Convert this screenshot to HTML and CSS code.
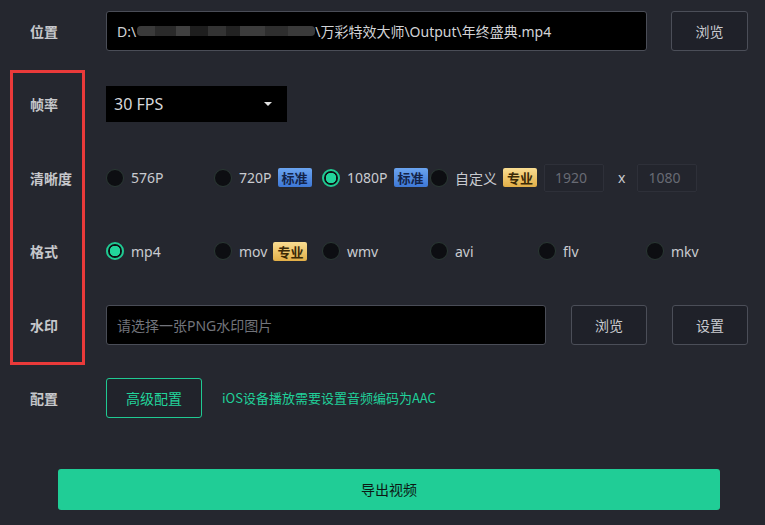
FILE: index.html
```html
<!DOCTYPE html>
<html lang="zh-CN">
<head>
<meta charset="utf-8">
<link rel="stylesheet" href="styles.css">
</head>
<body>
<div class="panel">
  <div class="annot"></div>
  <div class="rows">
    <div class="row">
      <div class="label">位置</div>
      <div class="field path">D:\<span class="blur"></span>\万彩特效大师\Output\年终盛典.mp4</div>
      <div class="btn w77">浏览</div>
    </div>
    <div class="row">
      <div class="label">帧率</div>
      <div class="select"><span>30 FPS</span><span class="caret"></span></div>
    </div>
    <div class="row">
      <div class="label">清晰度</div>
      <div class="opts">
        <div class="opt"><span class="radio"></span><span>576P</span></div>
        <div class="opt"><span class="radio"></span><span>720P</span><span class="badge std">标准</span></div>
        <div class="opt"><span class="radio on"></span><span>1080P</span><span class="badge std">标准</span></div>
        <div class="opt last"><span class="radio"></span><span>自定义</span><span class="badge pro">专业</span><span class="num">1920</span><span class="times">x</span><span class="num">1080</span></div>
      </div>
    </div>
    <div class="row">
      <div class="label">格式</div>
      <div class="opts">
        <div class="opt"><span class="radio on"></span><span>mp4</span></div>
        <div class="opt"><span class="radio"></span><span>mov</span><span class="badge pro">专业</span></div>
        <div class="opt"><span class="radio"></span><span>wmv</span></div>
        <div class="opt"><span class="radio"></span><span>avi</span></div>
        <div class="opt"><span class="radio"></span><span>flv</span></div>
        <div class="opt"><span class="radio"></span><span>mkv</span></div>
      </div>
    </div>
    <div class="row">
      <div class="label">水印</div>
      <div class="field wm placeholder">请选择一张PNG水印图片</div>
      <div class="btn w76 gap">浏览</div>
      <div class="btn w76">设置</div>
    </div>
    <div class="row">
      <div class="label">配置</div>
      <div class="btn green">高级配置</div>
      <div class="note">iOS设备播放需要设置音频编码为AAC</div>
    </div>
  </div>
  <div class="export">导出视频</div>
</div>
</body>
</html>
```

FILE: styles.css
```css
* { box-sizing: border-box; }
html, body { margin: 0; padding: 0; }
body {
  background: #25272f;
  width: 765px;
  height: 525px;
  overflow: hidden;
  font-family: "Noto Sans", "Noto Sans CJK SC", sans-serif;
  font-size: 14px;
  color: #c9cbd0;
}
.panel {
  position: relative;
  padding-top: 11px;
  height: 525px;
}
.annot {
  position: absolute;
  left: 10px;
  top: 70px;
  width: 75px;
  height: 295px;
  border: 3px solid #ea3a3a;
}
.rows {
  display: flex;
  flex-direction: column;
  gap: 33.4px;
  padding-left: 30px;
}
.row {
  display: flex;
  align-items: center;
  height: 40px;
}
.label {
  width: 76px;
  flex: none;
  font-weight: 700;
  color: #c6c7cb;
  font-family: "Noto Sans CJK SC", sans-serif;
}
.field {
  height: 40px;
  flex: none;
  background: #000;
  border: 1px solid #4a4d57;
  border-radius: 3px;
  display: flex;
  align-items: center;
  padding-left: 10px;
  color: #d2d3d6;
  white-space: nowrap;
}
.path { width: 541px; margin-right: 24px; }
.blur {
  display: inline-block;
  width: 178px;
  height: 10px;
  margin-left: 1px;
  background: linear-gradient(90deg, #3a3a3a 0 10%, #2a2a2a 10% 22%, #404040 22% 30%, #1e1e1e 30% 40%, #333 40% 50%, #222 50% 58%, #3c3c3c 58% 72%, #2e2e2e 72% 85%, #3a3a3a 85% 100%);
  border-radius: 4px;
}
.wm { width: 440px; margin-right: 25px; }
.placeholder { color: #72747b; }
.btn {
  height: 40px;
  border: 1px solid #4b4e58;
  border-radius: 3px;
  background: #1f2129;
  display: flex;
  align-items: center;
  justify-content: center;
  color: #c9cbd0;
  flex: none;
  font-family: "Noto Sans CJK SC", sans-serif;
}
.w77 { width: 77px; }
.w76 { width: 76px; }
.w76.gap { margin-right: 25px; }
.btn.green {
  width: 96px;
  border-color: #20c992;
  color: #22d59b;
  background: #21232b;
  margin-right: 20px;
}
.note {
  color: #20d099;
  font-size: 13px;
  font-family: "Noto Sans CJK SC", sans-serif;
}
.select {
  width: 181px;
  height: 36px;
  background: #000;
  display: flex;
  align-items: center;
  justify-content: space-between;
  padding: 0 15px 0 8px;
  color: #d6d7da;
  font-size: 16px;
}
.caret {
  width: 0;
  height: 0;
  border-left: 4.5px solid transparent;
  border-right: 4.5px solid transparent;
  border-top: 4px solid #e0e0e0;
}
.opts { display: flex; align-items: center; }
.opt {
  width: 108px;
  display: flex;
  align-items: center;
  flex: none;
  white-space: nowrap;
}
.opt.last { width: auto; }
.radio {
  width: 18px;
  height: 18px;
  border-radius: 50%;
  background: #0d0e12;
  border: 1px solid #2a3833;
  margin-right: 7px;
  flex: none;
}
.radio.on {
  border: 2px solid #20c992;
  background: radial-gradient(circle, #22d59b 0 5px, #0f1014 5.5px);
}
.badge {
  display: inline-flex;
  align-items: center;
  justify-content: center;
  width: 34px;
  height: 19px;
  border-radius: 2px;
  font-size: 13px;
  font-weight: 700;
  margin-left: 6px;
  font-family: "Noto Sans CJK SC", sans-serif;
}
.std {
  background: linear-gradient(#6ba4f0, #3e78d6);
  color: #14244a;
}
.pro {
  background: linear-gradient(#f9dd92, #e2ae47);
  color: #3a2906;
}
.num {
  width: 60px;
  height: 28px;
  border: 1px solid #2e3039;
  background: #23252d;
  color: #686b74;
  display: inline-flex;
  align-items: center;
  padding-left: 10px;
  margin-left: 7px;
  border-radius: 2px;
  flex: none;
}
.times {
  margin: 0 5px 0 14px;
  color: #c9cbd0;
}
.export {
  margin: 51px 0 0 58px;
  width: 662px;
  height: 41px;
  background: #20cd96;
  border-radius: 3px;
  display: flex;
  align-items: center;
  justify-content: center;
  color: #0d1814;
  font-family: "Noto Sans CJK SC", sans-serif;
}
```
